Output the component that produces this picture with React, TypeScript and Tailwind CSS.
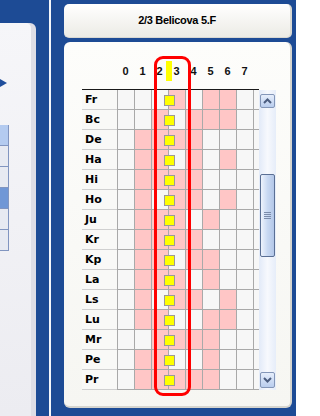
import React from "react";

const font = { fontFamily: '"Liberation Sans", Arial, sans-serif' };
const labelFont = { fontFamily: '"DejaVu Sans", Verdana, sans-serif' };

// pink columns per row (0..8)
const rows: [string, number[]][] = [
  ["Fr", [3, 5, 6]],
  ["Bc", [2, 4, 5, 6]],
  ["De", [1, 2, 3, 4]],
  ["Ha", [1, 2, 4, 6]],
  ["Hi", [1, 2, 3, 4]],
  ["Ho", [1, 3, 4, 6]],
  ["Ju", [1, 2, 3, 5]],
  ["Kr", [1, 2, 3, 4]],
  ["Kp", [1, 2, 4, 5]],
  ["La", [1, 2, 3, 5]],
  ["Ls", [1, 3, 4, 6]],
  ["Lu", [1, 2, 5, 6]],
  ["Mr", [2, 3, 4, 5]],
  ["Pe", [1, 2, 5]],
  ["Pr", [1, 2, 3, 4, 5]],
];

const cols = [0, 1, 2, 3, 4, 5, 6, 7];

function GridRow({ label, pink }: { label: string; pink: number[] }) {
  return (
    <div className="relative flex h-[20px]">
      <div
        className="w-[35px] h-[20px] border-b border-[#d0d0d0] bg-[#f9f9f7] pl-[3px] text-[11px] font-bold leading-[19px] text-black"
        style={labelFont}
      >
        {label}
      </div>
      {cols.map((c) => (
        <div
          key={c}
          className={`w-[17px] h-[20px] border-l border-b border-[#a9a9a9] ${
            pink.includes(c) ? "bg-[#ffc6c6]" : "bg-[#f7f7f7]"
          }`}
        />
      ))}
      <div className="w-[6px] h-[20px] border-l border-b border-[#a9a9a9] bg-[#f7f7f7]" />
      <div className="absolute left-[82px] top-[5px] w-[11px] h-[11px] border border-[#9a9a9a] bg-[#ffff00]" />
    </div>
  );
}

function ScrollButton({ up }: { up?: boolean }) {
  return (
    <div className="mx-[1px] w-[15px] h-full rounded-[2px] border border-[#8396b8] bg-gradient-to-b from-[#e6eefb] to-[#b9cdee] flex items-center justify-center">
      <svg width="9" height="6" viewBox="0 0 9 6">
        <path
          d={up ? "M1 5 L4.5 1.5 L8 5" : "M1 1 L4.5 4.5 L8 1"}
          fill="none"
          stroke="#4b5d80"
          strokeWidth="2"
        />
      </svg>
    </div>
  );
}

function Scrollbar() {
  return (
    <div className="w-[17px] h-[300px] flex flex-col bg-gradient-to-r from-[#e2eaf8] via-[#f7f9fd] to-[#e6edf9]">
      <div className="mt-[4px] h-[14px]">
        <ScrollButton up />
      </div>
      <div className="mt-[66px] mx-[1px] w-[15px] h-[83px] rounded-[2px] border border-[#5a6f94] bg-gradient-to-r from-[#eef3fc] via-[#c9d9f2] to-[#b3c7e8] flex flex-col items-center justify-center gap-[1px]">
        <div className="w-[7px] h-[1px] bg-[#7b8cab]" />
        <div className="w-[7px] h-[1px] bg-[#7b8cab]" />
        <div className="w-[7px] h-[1px] bg-[#7b8cab]" />
        <div className="w-[7px] h-[1px] bg-[#7b8cab]" />
      </div>
      <div className="mt-[115px] h-[16px]">
        <ScrollButton />
      </div>
    </div>
  );
}

function LeftPanel() {
  const cells = [
    "bg-[#b4cbf0]",
    "bg-[#e7eaf2]",
    "bg-[#e7eaf2]",
    "bg-[#7097d6]",
    "bg-[#e7eaf2]",
    "bg-[#e7eaf2]",
  ];
  return (
    <div className="w-[36px] pt-[23px] shrink-0">
      <div className="h-[393px] rounded-tr-[6px] flex bg-[#dedee6]">
        <div className="w-[31px] h-full rounded-tr-[5px] bg-gradient-to-b from-[#f6f6f9] to-[#ececf1]">
          <div className="pt-[56px]">
            <svg width="8" height="8" viewBox="0 0 8 8">
              <path d="M0 0 L7 4 L0 8 Z" fill="#1f4e9c" />
            </svg>
          </div>
          <div className="mt-[38px] w-[9px] flex flex-col">
            {cells.map((c, i) => (
              <div
                key={i}
                className={`h-[21px] border-b border-r border-[#8195c0] ${c}`}
              />
            ))}
          </div>
        </div>
      </div>
    </div>
  );
}

export default function App() {
  return (
    <div
      className="w-[296px] h-[416px] overflow-hidden bg-[#1d4b95] flex"
      style={font}
    >
      <LeftPanel />
      <div className="w-[13px] shrink-0" />
      <div className="w-[2px] shrink-0 bg-[#f4f6fa]" />
      <div className="w-[13px] shrink-0" />
      <div className="w-[228px] shrink-0 pt-[4px] flex flex-col gap-[4px]">
        <div className="h-[34px] rounded-[5px] border-r-2 border-b border-[#d9d8d2] bg-gradient-to-b from-[#ffffff] to-[#ecebe5] flex items-center justify-center text-[11px] font-bold tracking-[-0.3px] text-black">
          2/3 Belicova 5.F
        </div>
        <div className="relative h-[366px] rounded-[6px] border-r-2 border-b-2 border-[#d6d5cf] bg-gradient-to-b from-[#fdfdfb] to-[#f6f6f2] pl-[18px]">
          <div className="relative h-[47px] flex items-end pb-[11px]">
            <div className="w-[35px]" />
            <div className="absolute left-[84px] top-[19px] w-[6px] h-[20px] bg-[#ffff00]" />
            {cols.map((c) => (
              <div
                key={c}
                className="relative w-[17px] text-center text-[11px] font-bold leading-[13px] text-[#111]"
              >
                {c}
              </div>
            ))}
          </div>
          <div className="flex">
            <div className="border-t border-[#1a1a1a]">
              {rows.map(([l, p]) => (
                <GridRow key={l} label={l} pink={p} />
              ))}
            </div>
            <div className="pt-[1px]">
              <Scrollbar />
            </div>
          </div>
          <div className="absolute left-[90px] top-[14px] w-[37px] h-[340px] rounded-[9px] border-[3px] border-[#ff0000] pointer-events-none" />
        </div>
      </div>
    </div>
  );
}
